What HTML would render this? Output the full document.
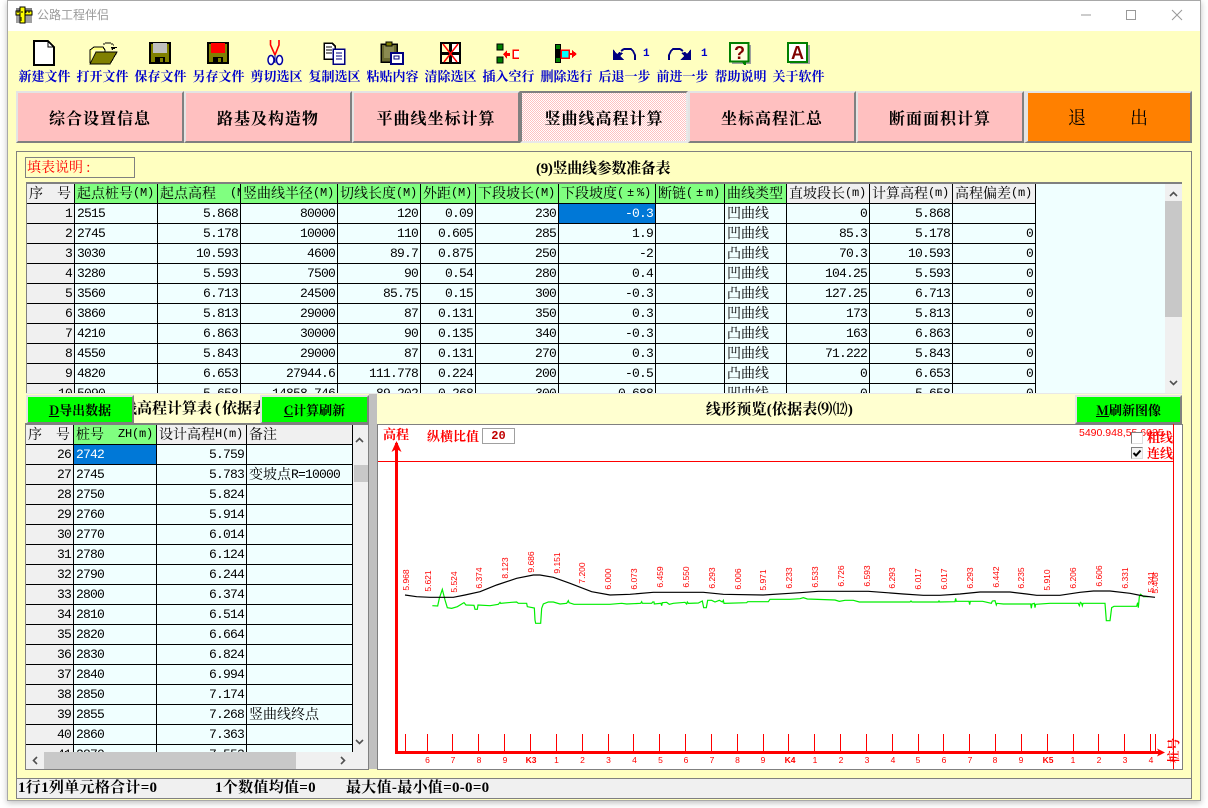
<!DOCTYPE html>
<html><head><meta charset="utf-8"><style>
*{box-sizing:border-box}
html,body{margin:0;padding:0;width:1208px;height:808px;background:#fff;overflow:hidden}
.a{position:absolute}
#win{left:7px;top:0;width:1194px;height:801px;background:#FFFFC0;border:1px solid #a8a8a8;box-shadow:0 2px 6px rgba(0,0,0,.25)}
#tb{left:8px;top:1px;width:1192px;height:30px;background:#fff}
.tl{top:69px;width:58px;text-align:center;font:bold 13px/14px "Noto Serif CJK SC",serif;color:#0000cc;white-space:nowrap}
.tab{top:91px;height:52px;background:#FFC0C0;border:2px solid;border-color:#e4e4e4 #808080 #808080 #e4e4e4;text-align:center;font:bold 16px/49px "Noto Serif CJK SC",serif;letter-spacing:1px;color:#000;white-space:nowrap}
.g{overflow:hidden;background:#F0FFFF}
table{position:absolute;left:0;top:0;border-collapse:separate;border-spacing:0;table-layout:fixed}
td{height:20px;padding:0 2px 0 2px;border-right:1px solid #000;border-bottom:1px solid #000;font:13px/19px "Liberation Mono",monospace;letter-spacing:-.8px;text-align:right;white-space:nowrap;overflow:hidden;background:#F0FFFF;color:#000;vertical-align:top}
td.l{text-align:left}
td.n{background:#F0F0F0}
td.h,td.gh{text-align:left;font:14px/19px "Noto Serif CJK SC",serif;letter-spacing:0;background:#80FF80}
td.gh{background:#F0F0F0}
td.s{background:#0078D7;color:#fff}
.c{font:14px/19px "Noto Serif CJK SC",serif;letter-spacing:0;vertical-align:top}
.m{font:12px/19px "Liberation Mono",monospace;letter-spacing:-.2px;vertical-align:top}
.pm{padding:0 3px}
.btn{height:29px;background:#00FF00;border:2px solid;border-color:#e4e4e4 #808080 #808080 #e4e4e4;text-align:center;font:bold 13px/26px "Noto Serif CJK SC",serif;color:#000;white-space:nowrap}
.sb{background:#F0F0F0}
.th{background:#C8C8C8}
.st{top:779px;font:bold 15px/19px "Liberation Serif","Noto Serif CJK SC",serif;letter-spacing:.3px;color:#000;white-space:nowrap}
.red{color:#f00;font:bold 13px/16px "Noto Serif CJK SC",serif;white-space:nowrap}
</style></head><body>
<div class="a" id="win"></div>
<div class="a" id="tb"></div>
<div class="a" style="left:37px;top:7px;font:12px/16px 'Noto Sans CJK SC',sans-serif;color:#9a9a9a">公路工程伴侣</div>

<svg class="a" style="left:0;top:0" width="1208" height="90" shape-rendering="crispEdges">
<rect x="16" y="8" width="4" height="3" fill="#808080"/><rect x="24" y="8" width="8" height="3" fill="#808080"/>
<rect x="16" y="15" width="5" height="8" fill="#a0a0a0"/><rect x="25" y="15" width="7" height="8" fill="#a0a0a0"/>
<rect x="16" y="11" width="16" height="4" fill="#FFFF00" stroke="#000" stroke-width=".6"/>
<rect x="20" y="7" width="5" height="16" fill="#FFFF00" stroke="#000" stroke-width=".8"/>
<path d="M18 11v2M22 11v2M26 11v2M29 11v2M20 18h2M20 20h2" stroke="#000" fill="none"/>
<path d="M1081 15h10" stroke="#999" fill="none"/>
<rect x="1126.500" y="10.500" width="9" height="9" fill="none" stroke="#999"/>
<path d="M1172 10l10 10M1182 10l-10 10" stroke="#999" fill="none" shape-rendering="auto"/>
<path d="M34 41h14l6 6v18H34z" fill="#fff" stroke="#000" stroke-width="2"/>
<path d="M48 42v5h5" fill="none" stroke="#000"/>
<path d="M90 63V50l4-3h9l2 3v2" fill="#FFFF80" stroke="#000" stroke-width="1"/>
<path d="M92 50h12v2h-8l-4 8z" fill="#FFFFC0"/>
<path d="M90 64l6-12h21l-7 12z" fill="#808000" stroke="#000" stroke-width="1"/>
<path d="M103 44h2M105 43h6M111 44h2M113 45h1" stroke="#000" fill="none"/>
<path d="M111 47h6v1h-2v1h-2v1h-1z" fill="#000"/>
<rect x="149" y="42" width="22" height="22" fill="#000"/><rect x="151" y="44" width="18" height="18" fill="#808000"/>
<rect x="153" y="43" width="14" height="10" fill="#C0C0C0"/><rect x="155" y="57" width="10" height="7" fill="#000"/><rect x="160" y="58" width="3" height="4" fill="#808000"/>
<rect x="207" y="42" width="22" height="22" fill="#000"/><rect x="209" y="44" width="18" height="18" fill="#808000"/>
<rect x="211" y="43" width="14" height="10" fill="#FF0000"/><rect x="213" y="57" width="10" height="7" fill="#000"/><rect x="218" y="58" width="3" height="4" fill="#808000"/>
<g shape-rendering="auto"><path d="M270.500 40v5l4.500 10M279 40v5l-4 10" fill="none" stroke="#f00" stroke-width="1.600"/>
<ellipse cx="271" cy="60" rx="3" ry="4.500" fill="#fff" stroke="#0000a0" stroke-width="1.500"/>
<ellipse cx="279.500" cy="60" rx="3" ry="4.500" fill="#fff" stroke="#0000a0" stroke-width="1.500"/>
<path d="M275 55v8" stroke="#0000a0" fill="none"/></g>
<path d="M324 43h8l3 3v13h-11z" fill="#fff" stroke="#000" stroke-width="1.500"/>
<path d="M326 47h6M326 50h6M326 53h6" stroke="#000" fill="none"/>
<rect x="333" y="49" width="11.500" height="15" fill="#fff" stroke="#000080" stroke-width="1.500"/>
<path d="M336 53h6M336 56h6M336 59h6" stroke="#000080" fill="none"/>
<rect x="381" y="44" width="16" height="18" fill="#6a6a30" stroke="#000" stroke-width="1.500"/>
<rect x="384" y="46" width="10" height="12" fill="#8a8a50"/>
<rect x="386" y="42" width="6" height="4" fill="#808000" stroke="#000"/>
<rect x="391" y="53" width="12" height="11" fill="#fff" stroke="#000080" stroke-width="2"/>
<path d="M394 56h5v3h-5z" fill="none" stroke="#000080"/>
<rect x="440" y="42" width="21" height="22" fill="#000"/>
<rect x="442" y="44" width="7" height="8" fill="#FFFFC0"/><rect x="452" y="44" width="7" height="8" fill="#fff"/>
<rect x="442" y="55" width="7" height="7" fill="#FFFFC0"/><rect x="452" y="55" width="7" height="7" fill="#fff"/>
<path d="M443 44l14 18M458 44l-14 18" stroke="#f00" stroke-width="1.500" fill="none" shape-rendering="auto"/>
<rect x="497" y="44" width="6" height="6" fill="#008000" stroke="#000"/><rect x="497" y="57" width="6" height="6" fill="#008000" stroke="#000"/>
<path d="M503 54l4-4v3h3v3h-3v3z" fill="#f00"/>
<path d="M519 50h-6v8h6" fill="#fff" stroke="#f00" stroke-width="1.500"/>
<rect x="555" y="44" width="6" height="19" fill="#000"/>
<rect x="556" y="45" width="4" height="4" fill="#008000"/><rect x="556" y="58" width="4" height="4" fill="#008000"/>
<rect x="561" y="50" width="8" height="8" fill="#00FFFF" stroke="#f00" stroke-width="1.500"/>
<path d="M569 53h3v-3l5 4-5 4v-3h-3z" fill="#f00"/>
<path d="M613 49v11h11l-4-4 3-3-4-1-2 2z" fill="#000080"/>
<path d="M621 51l3-2h7l2 2 1 2 1 2v5" fill="none" stroke="#000080" stroke-width="2"/>
<path d="M691 49v11h-11l4-4-3-3 4-1 2 2z" fill="#000080"/>
<path d="M683 51l-3-2h-7l-2 2-1 2-1 2v5" fill="none" stroke="#000080" stroke-width="2"/>
<rect x="732" y="45" width="19" height="19" fill="#a0a0a0"/>
<rect x="730" y="43" width="18.500" height="18.500" fill="#FFFFE0" stroke="#008000" stroke-width="2"/>
<path d="M742 62h4v3h-2z" fill="#008000"/>
<text x="739.500" y="59" text-anchor="middle" font-family="Liberation Sans" font-weight="bold" font-size="18" fill="#800000" shape-rendering="auto">?</text>
<rect x="790" y="45" width="20" height="19" fill="#a0a0a0"/>
<rect x="788" y="43" width="19" height="19" fill="#fff" stroke="#008000" stroke-width="2"/>
<text x="797.500" y="59" text-anchor="middle" font-family="Liberation Sans" font-weight="bold" font-size="18" fill="#800000">A</text>
</svg>
<div class="a" style="left:643px;top:47px;font:bold 11px/14px 'Liberation Mono',monospace;color:#0000c8">1</div>
<div class="a" style="left:701px;top:47px;font:bold 11px/14px 'Liberation Mono',monospace;color:#0000c8">1</div>

<div class="a tl" style="left:15.500px">新建文件</div>
<div class="a tl" style="left:73.500px">打开文件</div>
<div class="a tl" style="left:131.500px">保存文件</div>
<div class="a tl" style="left:189.500px">另存文件</div>
<div class="a tl" style="left:247.500px">剪切选区</div>
<div class="a tl" style="left:305.500px">复制选区</div>
<div class="a tl" style="left:363.500px">粘贴内容</div>
<div class="a tl" style="left:421.500px">清除选区</div>
<div class="a tl" style="left:479.500px">插入空行</div>
<div class="a tl" style="left:537.500px">删除选行</div>
<div class="a tl" style="left:595.500px">后退一步</div>
<div class="a tl" style="left:653.500px">前进一步</div>
<div class="a tl" style="left:711.500px">帮助说明</div>
<div class="a tl" style="left:769.500px">关于软件</div>

<div class="a tab" style="left:16px;width:168px">综合设置信息</div>
<div class="a tab" style="left:184px;width:168px">路基及构造物</div>
<div class="a tab" style="left:352px;width:168px">平曲线坐标计算</div>
<svg class="a" style="left:520px;top:91px" width="168" height="52" shape-rendering="crispEdges"><defs><pattern id="dt" width="2" height="2" patternUnits="userSpaceOnUse"><rect width="2" height="2" fill="#FFC0C0"/><rect width="1" height="1" fill="#fff"/><rect x="1" y="1" width="1" height="1" fill="#fff"/></pattern></defs><rect width="168" height="52" fill="url(#dt)"/></svg>
<div class="a tab" style="left:520px;width:168px;border-color:#808080 #e8e8e8 #e8e8e8 #808080;background:transparent">竖曲线高程计算</div>
<div class="a tab" style="left:688px;width:168px">坐标高程汇总</div>
<div class="a tab" style="left:856px;width:168px">断面面积计算</div>
<div class="a tab" style="left:1024px;width:168px;background:#FF8000;border-left:4px solid #e4e4e4;font-weight:normal;font-size:18px"><span style="position:absolute;left:40px;top:0">退</span><span style="position:absolute;left:102px;top:0">出</span></div>

<div class="a" style="left:16px;top:151px;width:1176px;height:628px;border:1px solid #808080;border-bottom:0;background:#FFFFC0"></div>
<div class="a" style="left:25px;top:157px;width:110px;height:21px;border:1px solid #808080;font:14px/19px 'Noto Serif CJK SC',serif;color:#f00;padding-left:1px">填表说明<span style="padding-left:3px">:</span></div>
<div class="a" style="left:536px;top:160px;font:bold 15px/18px 'Liberation Serif','Noto Serif CJK SC',serif;letter-spacing:-.3px;white-space:nowrap">(9)竖曲线参数准备表</div>

<!-- top grid -->
<div class="a g" style="left:26px;top:182px;width:1156px;height:212px;border-top:2px solid #808080;border-left:1px solid #808080">
<table style="width:1009px">
<colgroup><col style="width:48px"><col style="width:83px"><col style="width:83px"><col style="width:97px"><col style="width:83px"><col style="width:55px"><col style="width:83px"><col style="width:97px"><col style="width:69px"><col style="width:62px"><col style="width:83px"><col style="width:83px"><col style="width:83px"></colgroup>
<tr><td class="gh">序　号</td><td class="h">起点桩号<span class="m">(M)</span></td><td class="h">起点高程<span class="m">&nbsp;&nbsp;(M</span></td><td class="h">竖曲线半径<span class="m">(M)</span></td><td class="h">切线长度<span class="m">(M)</span></td><td class="h">外距<span class="m">(M)</span></td><td class="h">下段坡长<span class="m">(M)</span></td><td class="h">下段坡度<span class="m">(<span class="pm">±</span>%)</span></td><td class="h">断链<span class="m">(<span class="pm">±</span>m)</span></td><td class="h">曲线类型</td><td class="gh">直坡段长<span class="m">(m)</span></td><td class="gh">计算高程<span class="m">(m)</span></td><td class="gh">高程偏差<span class="m">(m)</span></td></tr>
<tr><td class="n">1</td><td class="l">2515</td><td>5.868</td><td>80000</td><td>120</td><td>0.09</td><td>230</td><td class="s">-0.3</td><td></td><td class="l"><span class="c">凹曲线</span></td><td>0</td><td>5.868</td><td></td></tr>
<tr><td class="n">2</td><td class="l">2745</td><td>5.178</td><td>10000</td><td>110</td><td>0.605</td><td>285</td><td>1.9</td><td></td><td class="l"><span class="c">凹曲线</span></td><td>85.3</td><td>5.178</td><td>0</td></tr>
<tr><td class="n">3</td><td class="l">3030</td><td>10.593</td><td>4600</td><td>89.7</td><td>0.875</td><td>250</td><td>-2</td><td></td><td class="l"><span class="c">凸曲线</span></td><td>70.3</td><td>10.593</td><td>0</td></tr>
<tr><td class="n">4</td><td class="l">3280</td><td>5.593</td><td>7500</td><td>90</td><td>0.54</td><td>280</td><td>0.4</td><td></td><td class="l"><span class="c">凹曲线</span></td><td>104.25</td><td>5.593</td><td>0</td></tr>
<tr><td class="n">5</td><td class="l">3560</td><td>6.713</td><td>24500</td><td>85.75</td><td>0.15</td><td>300</td><td>-0.3</td><td></td><td class="l"><span class="c">凸曲线</span></td><td>127.25</td><td>6.713</td><td>0</td></tr>
<tr><td class="n">6</td><td class="l">3860</td><td>5.813</td><td>29000</td><td>87</td><td>0.131</td><td>350</td><td>0.3</td><td></td><td class="l"><span class="c">凹曲线</span></td><td>173</td><td>5.813</td><td>0</td></tr>
<tr><td class="n">7</td><td class="l">4210</td><td>6.863</td><td>30000</td><td>90</td><td>0.135</td><td>340</td><td>-0.3</td><td></td><td class="l"><span class="c">凸曲线</span></td><td>163</td><td>6.863</td><td>0</td></tr>
<tr><td class="n">8</td><td class="l">4550</td><td>5.843</td><td>29000</td><td>87</td><td>0.131</td><td>270</td><td>0.3</td><td></td><td class="l"><span class="c">凹曲线</span></td><td>71.222</td><td>5.843</td><td>0</td></tr>
<tr><td class="n">9</td><td class="l">4820</td><td>6.653</td><td>27944.6</td><td>111.778</td><td>0.224</td><td>200</td><td>-0.5</td><td></td><td class="l"><span class="c">凸曲线</span></td><td>0</td><td>6.653</td><td>0</td></tr>
<tr><td class="n">10</td><td class="l">5090</td><td>5.658</td><td>14858.746</td><td>89.202</td><td>0.268</td><td>300</td><td>0.688</td><td></td><td class="l"><span class="c">凹曲线</span></td><td>0</td><td>5.658</td><td>0</td></tr>
</table>
<div class="a sb" style="left:1138px;top:0;width:17px;height:210px"></div>
<div class="a th" style="left:1138px;top:17px;width:17px;height:116px"></div>
</div>
<svg class="a" style="left:1165px;top:183px" width="17" height="211"><path d="M5 13l3.500-3.500L12 13M5 198l3.500 3.500L12 198" fill="none" stroke="#505050" stroke-width="1.600"/></svg>

<!-- middle bars -->
<div class="a" style="left:134px;top:394px;width:127px;height:30px;background:#FFFFD0;overflow:hidden;font:bold 15px/30px 'Liberation Serif','Noto Serif CJK SC',serif;white-space:nowrap"><span style="position:absolute;left:-12px;top:0">线高程计算表<span style="padding:0 2px 0 3px">(</span>依据表</span></div>
<div class="a btn" style="left:26px;top:395px;width:108px"><u>D</u>导出数据</div>
<div class="a btn" style="left:260px;top:395px;width:109px"><u>C</u>计算刷新</div>
<div class="a" style="left:369px;top:393px;width:8px;height:376px;background:#C0C0C0"></div>
<div class="a" style="left:377px;top:394px;width:805px;height:30px;background:#FFFFD0;text-align:center;font:bold 15px/29px 'Liberation Serif','Noto Serif CJK SC',serif;letter-spacing:.2px;padding-top:2px">线形预览(依据表⑼⑿)</div>
<div class="a btn" style="left:1075px;top:395px;width:107px"><u>M</u>刷新图像</div>
<div class="a" style="left:26px;top:393px;width:1156px;height:1px;background:#e8e8e8"></div>

<!-- bottom grid -->
<div class="a g" style="left:25px;top:423px;width:344px;height:347px;background:#F0F0F0;border:1px solid #808080;border-width:2px 1px 1px 1px">
<div class="a" style="left:0;top:0;width:327px;height:327px;overflow:hidden">
<table style="width:327px">
<colgroup><col style="width:48px"><col style="width:83px"><col style="width:90px"><col style="width:106px"></colgroup>
<tr><td class="gh">序　号</td><td class="h">桩号<span class="m">&nbsp;&nbsp;ZH(m)</span></td><td class="gh">设计高程<span class="m">H(m)</span></td><td class="gh">备注</td></tr>
<tr><td class="n">26</td><td class="l s">2742</td><td>5.759</td><td></td></tr>
<tr><td class="n">27</td><td class="l">2745</td><td>5.783</td><td class="l"><span class="c">变坡点</span>R=10000</td></tr>
<tr><td class="n">28</td><td class="l">2750</td><td>5.824</td><td></td></tr>
<tr><td class="n">29</td><td class="l">2760</td><td>5.914</td><td></td></tr>
<tr><td class="n">30</td><td class="l">2770</td><td>6.014</td><td></td></tr>
<tr><td class="n">31</td><td class="l">2780</td><td>6.124</td><td></td></tr>
<tr><td class="n">32</td><td class="l">2790</td><td>6.244</td><td></td></tr>
<tr><td class="n">33</td><td class="l">2800</td><td>6.374</td><td></td></tr>
<tr><td class="n">34</td><td class="l">2810</td><td>6.514</td><td></td></tr>
<tr><td class="n">35</td><td class="l">2820</td><td>6.664</td><td></td></tr>
<tr><td class="n">36</td><td class="l">2830</td><td>6.824</td><td></td></tr>
<tr><td class="n">37</td><td class="l">2840</td><td>6.994</td><td></td></tr>
<tr><td class="n">38</td><td class="l">2850</td><td>7.174</td><td></td></tr>
<tr><td class="n">39</td><td class="l">2855</td><td>7.268</td><td class="l"><span class="c">竖曲线终点</span></td></tr>
<tr><td class="n">40</td><td class="l">2860</td><td>7.363</td><td></td></tr>
<tr><td class="n">41</td><td class="l">2870</td><td>7.553</td><td></td></tr>
</table></div>
<div class="a th" style="left:328px;top:40px;width:14px;height:17px"></div>
<div class="a th" style="left:18px;top:327px;width:252px;height:17px"></div>
</div>
<svg class="a" style="left:25px;top:425px" width="344" height="345"><path d="M331 17l3.500-3.500L338 17M331 315l3.500 3.500L338 315M12 332l-3.500 3.500L12 339M316 332l3.500 3.500L316 339" fill="none" stroke="#505050" stroke-width="1.600"/></svg>

<!-- plot -->
<div class="a" style="left:377px;top:424px;width:806px;height:346px;background:#fff;border:1px solid #808080"></div>
<svg class="a" style="left:0;top:0" width="1208" height="808" font-family="Liberation Sans" fill="#f00">
<g shape-rendering="crispEdges" stroke="#f00" fill="none">
<path d="M378 461.500H1173M1173.500 424V769"/>
<path d="M396.500 443V752.500H1160" stroke-width="3"/>
<path d="M405.500 734V752M427.500 734V752M452.500 734V752M478.500 734V752M504.500 734V752M530.500 734V752M556.500 734V752M582.500 734V752M608.500 734V752M633.500 734V752M659.500 734V752M685.500 734V752M711.500 734V752M737.500 734V752M763.500 734V752M788.500 734V752M814.500 734V752M840.500 734V752M866.500 734V752M892.500 734V752M918.500 734V752M943.500 734V752M969.500 734V752M995.500 734V752M1021.500 734V752M1047.500 734V752M1073.500 734V752M1098.500 734V752M1124.500 734V752M1150.500 734V752M1155.500 734V752"/>
</g>
<path d="M396.500 441l-5 11 5-3 5 3zM1165 752.500l-8-4 2 4-2 4z"/>
<g font-size="8.500" text-anchor="middle">
<text x="427.500" y="763">6</text><text x="453" y="763">7</text><text x="479" y="763">8</text><text x="505" y="763">9</text><text x="531" y="763" font-weight="bold">K3</text><text x="556.500" y="763">1</text><text x="582.500" y="763">2</text><text x="608.500" y="763">3</text><text x="634.500" y="763">4</text><text x="660.500" y="763">5</text><text x="686" y="763">6</text><text x="712" y="763">7</text><text x="737.500" y="763">8</text><text x="763" y="763">9</text><text x="790" y="763" font-weight="bold">K4</text><text x="815" y="763">1</text><text x="841" y="763">2</text><text x="867" y="763">3</text><text x="893" y="763">4</text><text x="918" y="763">5</text><text x="944" y="763">6</text><text x="970" y="763">7</text><text x="995" y="763">8</text><text x="1021" y="763">9</text><text x="1048" y="763" font-weight="bold">K5</text><text x="1073" y="763">1</text><text x="1099" y="763">2</text><text x="1125" y="763">3</text><text x="1151" y="763">4</text>
</g>
<g font-size="8.500" text-anchor="middle">
<text transform="translate(409,580) rotate(-90)">5.968</text>
<text transform="translate(431,581) rotate(-90)">5.621</text>
<text transform="translate(457,582) rotate(-90)">5.524</text>
<text transform="translate(482,578) rotate(-90)">6.374</text>
<text transform="translate(508,568) rotate(-90)">8.123</text>
<text transform="translate(534,562) rotate(-90)">9.686</text>
<text transform="translate(560,563) rotate(-90)">9.151</text>
<text transform="translate(585,573) rotate(-90)">7.200</text>
<text transform="translate(611,579) rotate(-90)">6.000</text>
<text transform="translate(637,579) rotate(-90)">6.073</text>
<text transform="translate(663,577) rotate(-90)">6.459</text>
<text transform="translate(689,577) rotate(-90)">6.550</text>
<text transform="translate(715,578) rotate(-90)">6.293</text>
<text transform="translate(741,579) rotate(-90)">6.006</text>
<text transform="translate(766,580) rotate(-90)">5.971</text>
<text transform="translate(792,578) rotate(-90)">6.233</text>
<text transform="translate(818,577) rotate(-90)">6.533</text>
<text transform="translate(844,576) rotate(-90)">6.726</text>
<text transform="translate(870,576) rotate(-90)">6.593</text>
<text transform="translate(895,578) rotate(-90)">6.293</text>
<text transform="translate(921,579) rotate(-90)">6.017</text>
<text transform="translate(947,579) rotate(-90)">6.017</text>
<text transform="translate(973,578) rotate(-90)">6.293</text>
<text transform="translate(999,577) rotate(-90)">6.442</text>
<text transform="translate(1024,578) rotate(-90)">6.235</text>
<text transform="translate(1050,580) rotate(-90)">5.910</text>
<text transform="translate(1076,578) rotate(-90)">6.206</text>
<text transform="translate(1102,576) rotate(-90)">6.606</text>
<text transform="translate(1128,578) rotate(-90)">6.331</text>
<text transform="translate(1154,582) rotate(-90)">5.341</text>
<text transform="translate(1158,583) rotate(-90)">5.408</text>
</g>
<g fill="none" stroke-width="3.600">
<g transform="translate(370 540) scale(.33333)">
<path fill="none" stroke="#00ee00" d="M187 197L203 198L208 175L217 148L225 180L232 203L245 205L262 200L282 188L288 195L312 196L315 208L322 208L324 195L360 197L385 193L390 187L392 190L425 187L440 186L445 190L470 190L472 200L493 204L495 240L497 250L512 250L515 205L520 192L535 186L550 186L570 192L590 190L595 182L597 188L612 193L720 193L755 190L770 192L812 190L815 185L817 190L845 190L848 186L852 186L853 192L873 190L875 197L877 188L890 187L898 193L910 190L945 187L950 192L952 186L955 190L985 189L997 183L1001 203L1009 203L1013 181L1025 181L1035 186L1048 181L1057 186L1060 181L1062 190L1130 188L1133 185L1195 185L1200 178L1260 178"/>
<path fill="none" stroke="#000" d="M105 165L140 170L180 172L250 172L285 165L330 155L380 135L440 115L490 105L510 105L550 112L600 130L665 155L720 165L780 163L850 157L1000 157L1060 163L1180 165L1260 160"/>
</g>
<g transform="translate(790 540) scale(.33333)">
<path fill="none" stroke="#00ee00" d="M0 178L30 176L40 173L52 177L135 180L148 184L165 181L190 181L208 186L360 186L363 183L366 186L445 186L447 183L449 186L495 185L497 175L499 184L537 184L539 194L541 184L578 184L604 190L607 183L615 182L619 195L621 190L640 192L722 192L724 205L726 192L733 190L735 203L737 193L780 190L865 190L868 197L871 187L875 190L877 197L879 190L945 190L949 242L960 242L965 203L972 199L1040 199L1043 188L1045 203L1048 170L1052 163L1060 170L1075 170"/>
<path fill="none" stroke="#000" d="M0 160L30 158L85 154L235 154L290 158L340 162L400 166L450 166L510 162L570 156L660 156L710 162L740 166L810 166L870 157L910 153L960 153L1020 160L1060 168L1095 172"/>
</g>
</g>
<text transform="translate(1178,763) rotate(-90)" font-family="Noto Serif CJK SC" font-weight="bold" font-size="12.500">桩号</text>
</svg>
<div class="a red" style="left:383px;top:426px">高程</div>
<div class="a red" style="left:427px;top:428px">纵横比值</div>
<div class="a" style="left:482px;top:428px;width:33px;height:16px;border:1px solid #a0a0a0;font:bold 12px/14px 'Liberation Mono',monospace;color:#c00000;text-align:center;background:#fff">20</div>
<div class="a" style="left:1079px;top:426px;font:10.500px/14px 'Liberation Sans',sans-serif;color:#f00;white-space:nowrap;width:94px;overflow:hidden">5490.948,55.6035</div>
<div class="a" style="left:1131px;top:432px;width:12px;height:12px;background:#fff;border:1px solid #808080;border-right-color:#ddd;border-bottom-color:#ddd"></div>
<div class="a" style="left:1131px;top:447px;width:12px;height:12px;background:#f4f4f4;border:1px solid #808080;border-right-color:#ddd;border-bottom-color:#ddd"></div>
<svg class="a" style="left:1131px;top:447px" width="12" height="12"><path d="M2.500 6l2.500 2.500 4.500-5" fill="none" stroke="#000" stroke-width="2"/></svg>
<div class="a red" style="left:1147px;top:429px">粗线</div>
<div class="a red" style="left:1147px;top:445px">连线</div>

<!-- status -->
<div class="a" style="left:16px;top:778px;width:1176px;height:21px;background:#F0F0F0;border:1px solid #808080"></div>
<div class="a st" style="left:18px">1行1列单元格合计=0</div>
<div class="a st" style="left:215px">1个数值均值=0</div>
<div class="a st" style="left:346px">最大值-最小值=0-0=0</div>
</body></html>
